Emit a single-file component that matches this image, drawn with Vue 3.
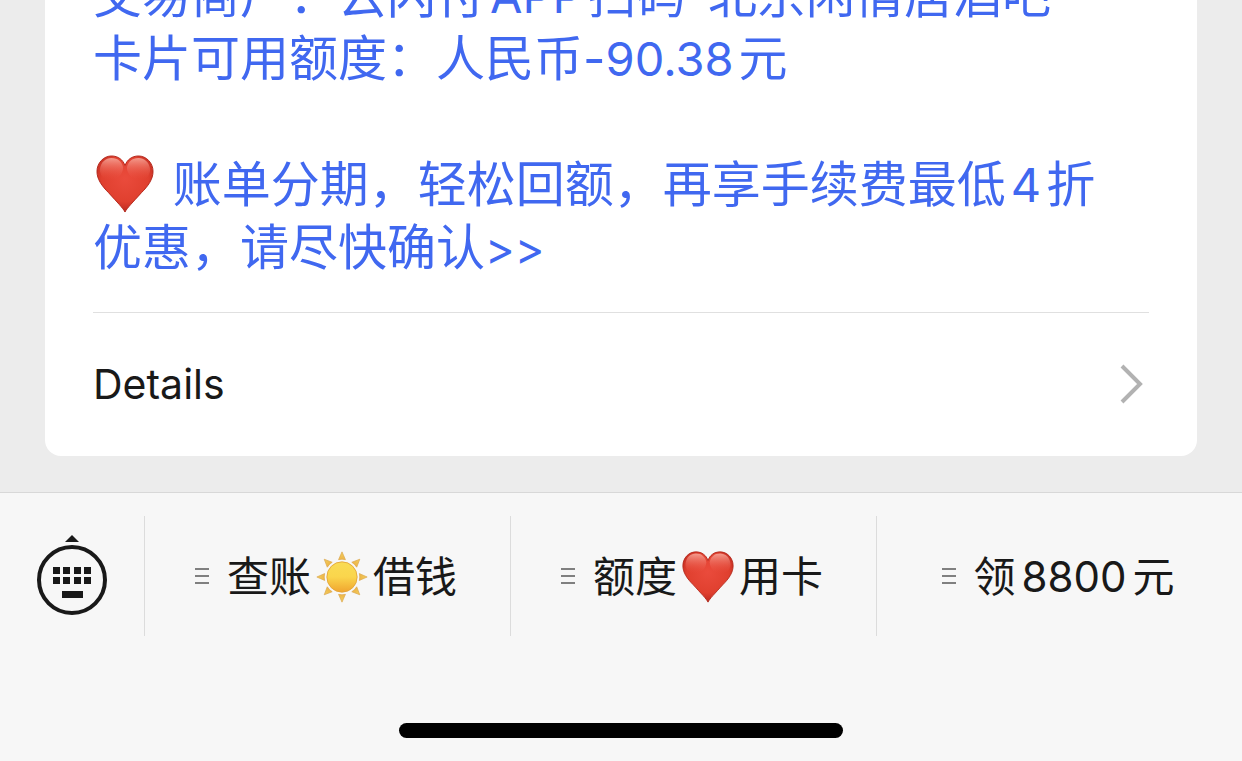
<script setup>
const menus = [
  { before: '查账', emoji: 'sun', after: '借钱' },
  { before: '额度', emoji: 'heart', after: '用卡' },
  { before: '领', number: '8800', after: '元' },
]
const rays = [0, 45, 90, 135, 180, 225, 270, 315]
</script>

<template>
  <div class="screen">
    <svg class="defs" width="0" height="0" aria-hidden="true">
      <defs>
        <radialGradient id="heart-fill" cx="0.5" cy="0.4" r="0.64">
          <stop offset="0" stop-color="#ea4b3c" />
          <stop offset="0.65" stop-color="#e0402f" />
          <stop offset="0.85" stop-color="#c73024" />
          <stop offset="1" stop-color="#8f1a10" />
        </radialGradient>
        <linearGradient id="heart-gloss" x1="0" y1="0" x2="0" y2="1">
          <stop offset="0" stop-color="#f9b3a6" stop-opacity="0.8" />
          <stop offset="1" stop-color="#ea4b3c" stop-opacity="0" />
        </linearGradient>
        <linearGradient id="sun-fill" x1="0" y1="0" x2="0" y2="1">
          <stop offset="0" stop-color="#f9dc55" />
          <stop offset="0.5" stop-color="#fad54c" />
          <stop offset="1" stop-color="#f0a52f" />
        </linearGradient>
        <linearGradient id="ray-fill" x1="0" y1="0" x2="0" y2="1">
          <stop offset="0" stop-color="#f3cf5c" />
          <stop offset="1" stop-color="#edb548" />
        </linearGradient>
        <symbol id="heart" viewBox="0 0 60 60">
          <path d="M30 59C28 55 22 49 13 39C6 32 1 25 1 17C1 8 8 1 16 1C23 1 28 5 30 11C32 5 37 1 44 1C52 1 59 8 59 17C59 25 54 32 47 39C38 49 32 55 30 59Z" fill="url(#heart-fill)" stroke="#b3271b" stroke-width="1" />
          <path d="M4 15C5 7 10 3 16 3C23 3 27 7 28 13C28 20 22 26 15 26C9 26 4 22 4 15Z" fill="url(#heart-gloss)" />
          <path d="M56 15C55 7 50 3 44 3C37 3 33 7 32 13C32 20 38 26 45 26C51 26 56 22 56 15Z" fill="url(#heart-gloss)" />
        </symbol>
        <symbol id="sun" viewBox="0 0 60 60">
          <path v-for="r in rays" :key="r" d="M30 1L34 10Q30 9 26 10Z" :transform="`rotate(${r} 30 30)`" fill="url(#ray-fill)" stroke="#dca850" stroke-width="0.8" />
          <circle cx="30" cy="30" r="17.5" fill="url(#sun-fill)" stroke="#e2a53a" stroke-width="1" />
        </symbol>
      </defs>
    </svg>

    <main class="thread">
      <article class="card">
        <div class="message">
          <p>交易商户：云闪付<span class="latin">APP</span>扫码-北京闲情居酒吧</p>
          <p>卡片可用额度：人民币-<span class="latin amount">90.38</span>元</p>
          <p class="notice">
            <svg class="emoji" role="img" aria-label="❤️"><use href="#heart" /></svg>
            账单分期，轻松回额，再享手续费最低<span class="latin">4</span>折优惠，请尽快确认<span class="arrows">&gt;&gt;</span>
          </p>
        </div>
        <a class="details" href="#">
          <span>Details</span>
          <svg class="chevron" viewBox="0 0 24 40" aria-hidden="true">
            <path d="M2 2L20 20L2 38" fill="none" stroke="#b2b2b2" stroke-width="4" />
          </svg>
        </a>
      </article>
    </main>

    <footer class="dock">
      <nav class="menu">
        <button class="keyboard" type="button" aria-label="Keyboard">
          <svg viewBox="0 0 72 82" aria-hidden="true">
            <path d="M36 1L43 8H29Z" />
            <circle cx="36" cy="46" r="33" fill="none" stroke="#191919" stroke-width="4" />
            <path d="M17 33h7v7h-7zM27 33h7v7h-7zM38 33h7v7h-7zM48 33h7v7h-7zM17 43h7v7h-7zM27 43h7v7h-7zM38 43h7v7h-7zM48 43h7v7h-7zM26 57h21v7H26z" />
          </svg>
        </button>
        <button v-for="m in menus" :key="m.before" class="item" type="button">
          <svg class="lines" viewBox="0 0 14 18" aria-hidden="true">
            <path d="M0 2H14M0 9H14M0 16H14" stroke="#808080" stroke-width="2" />
          </svg>
          <span class="label">
            <span>{{ m.before }}</span>
            <svg v-if="m.emoji" class="emoji" role="img" :aria-label="m.emoji"><use :href="'#' + m.emoji" /></svg>
            <span v-if="m.number" class="number">{{ m.number }}</span>
            <span>{{ m.after }}</span>
          </span>
        </button>
      </nav>
      <div class="home"></div>
    </footer>
  </div>
</template>

<style>
body {
  margin: 0;
}
</style>

<style scoped>
.screen {
  display: flex;
  flex-direction: column;
  height: 100vh;
  overflow: hidden;
  background: #ececec;
  color: #191919;
  font-family: Inter, "Noto Sans CJK SC", sans-serif;
}
.defs {
  position: absolute;
}
.thread {
  flex: 1;
  min-height: 0;
  display: flex;
  flex-direction: column;
  justify-content: flex-end;
  overflow: hidden;
  padding: 0 45px 36px;
}
.card {
  flex: none;
  padding: 0 48px;
  border-radius: 16px;
  background: #fff;
}
.message {
  padding: 32px 16px 33px 0;
  color: #4068f0;
  font-size: 49px;
  line-height: 63px;
}
.message p {
  margin: 0;
}
.message .notice {
  margin-top: 63px;
}
.latin {
  margin: 0 5px;
  font-size: 47px;
  line-height: 1;
}
.latin.amount {
  margin-left: 0;
}
.arrows {
  font-size: 45px;
  line-height: 1;
}
.notice .emoji {
  width: 58px;
  height: 58px;
  margin: 0 5px 0 3px;
  vertical-align: -11px;
}
.details {
  display: flex;
  align-items: center;
  justify-content: space-between;
  height: 141px;
  padding-bottom: 2px;
  border-top: 1px solid #e0e0e0;
  color: inherit;
  font-size: 41px;
  text-decoration: none;
}
.chevron {
  width: 24px;
  height: 40px;
  margin-right: 5px;
}
.dock {
  border-top: 1px solid #d8d8d8;
  background: #f7f7f7;
}
.menu {
  display: flex;
  height: 120px;
  padding-top: 23px;
}
button {
  display: flex;
  align-items: center;
  justify-content: center;
  padding: 0;
  border: 0;
  background: none;
  color: inherit;
  font: inherit;
}
.keyboard {
  flex: 0 0 144px;
  padding-bottom: 3px;
}
.keyboard svg {
  width: 72px;
  height: 82px;
  fill: #191919;
}
.item {
  flex: 1;
  gap: 18px;
  padding-right: 3px;
  border-left: 1px solid #dcdcdc;
}
.lines {
  width: 14px;
  height: 18px;
}
.label {
  display: flex;
  align-items: center;
  padding-top: 2px;
  font-size: 42px;
  line-height: 60px;
}
.label .emoji {
  width: 52px;
  height: 52px;
  margin: 0 5px;
}
.number {
  margin: 0 6px;
}
.home {
  width: 444px;
  height: 15px;
  margin: 87px auto 23px;
  border-radius: 8px;
  background: #000;
}
</style>
